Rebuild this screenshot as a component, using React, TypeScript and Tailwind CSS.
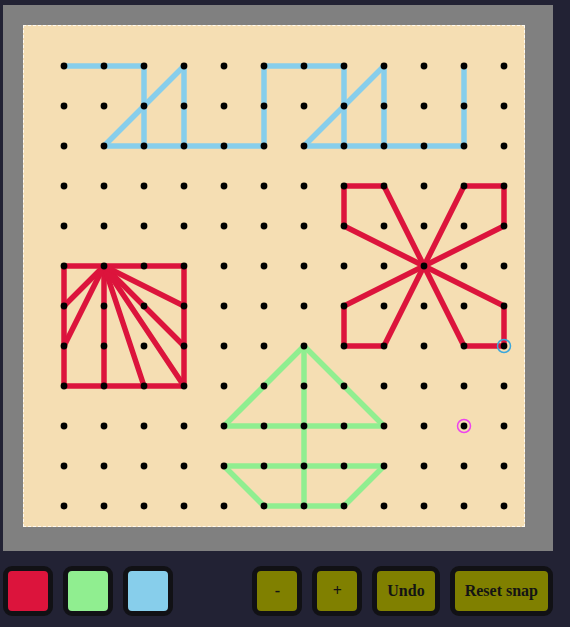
import React from "react";

type Seg = [number, number, number, number];

const RED = "#dc143c";
const GREEN = "#90ee90";
const BLUE = "#87ceeb";

const SHAPES: { color: string; segs: Seg[] }[] = [
  {
    color: BLUE,
    segs: [
      [0, 0, 2, 0], [2, 0, 2, 2], [3, 0, 1, 2], [3, 0, 3, 2], [1, 2, 5, 2], [5, 0, 5, 2],
      [5, 0, 7, 0], [7, 0, 7, 2], [8, 0, 6, 2], [8, 0, 8, 2], [6, 2, 10, 2], [10, 0, 10, 2],
    ],
  },
  {
    color: RED,
    segs: [
      [0, 5, 3, 5], [0, 5, 0, 8], [3, 5, 3, 8], [0, 8, 3, 8], [1, 5, 1, 8],
      [1, 5, 0, 6], [1, 5, 0, 7], [1, 5, 2, 8], [1, 5, 3, 8], [1, 5, 3, 7], [1, 5, 3, 6],
    ],
  },
  {
    color: RED,
    segs: [
      [7, 3, 8, 3], [7, 3, 7, 4], [8, 3, 9, 5], [7, 4, 9, 5],
      [10, 3, 11, 3], [11, 3, 11, 4], [10, 3, 9, 5], [11, 4, 9, 5],
      [7, 6, 7, 7], [7, 7, 8, 7], [7, 6, 9, 5], [8, 7, 9, 5],
      [11, 6, 11, 7], [10, 7, 11, 7], [11, 6, 9, 5], [10, 7, 9, 5],
    ],
  },
  {
    color: GREEN,
    segs: [
      [6, 7, 4, 9], [6, 7, 8, 9], [4, 9, 8, 9], [6, 7, 6, 11],
      [4, 10, 8, 10], [4, 10, 5, 11], [8, 10, 7, 11], [5, 11, 7, 11],
    ],
  },
];

const p = (n: number) => 40 + 40 * n;

function Board() {
  const dots: React.ReactNode[] = [];
  for (let r = 0; r < 12; r++) {
    for (let c = 0; c < 12; c++) {
      dots.push(<circle key={`${r}-${c}`} cx={p(c)} cy={p(r)} r={3.4} fill="#000" />);
    }
  }
  return (
    <svg width={500} height={500} className="block">
      {SHAPES.map((s, i) =>
        s.segs.map(([c1, r1, c2, r2], j) => (
          <line
            key={`${i}-${j}`}
            x1={p(c1)}
            y1={p(r1)}
            x2={p(c2)}
            y2={p(r2)}
            stroke={s.color}
            strokeWidth={5.5}
            strokeLinecap="round"
          />
        ))
      )}
      {dots}
      <circle cx={p(10)} cy={p(9)} r={6.5} fill="none" stroke="#ee44ee" strokeWidth={1.5} />
      <circle cx={p(11)} cy={p(7)} r={6.5} fill="none" stroke="#3ba6dc" strokeWidth={1.5} />
    </svg>
  );
}

function Swatch({ color }: { color: string }) {
  return (
    <button
      type="button"
      className="h-[50px] w-[50px] rounded-[9px] border-[5px] border-[#111115]"
      style={{ backgroundColor: color }}
    />
  );
}

function ToolButton({ label, square = false }: { label: string; square?: boolean }) {
  return (
    <button
      type="button"
      className={`h-[50px] ${square ? "w-[50px]" : "px-[10px]"} rounded-[9px] border-[5px] border-[#111115] bg-[#808000] font-['Liberation_Serif',serif] text-[16px] font-bold text-[#141414]`}
    >
      {label}
    </button>
  );
}

export default function App() {
  return (
    <div className="h-[627px] w-full bg-[#222234] pl-[3px] pt-[5px]">
      <div className="h-[546px] w-[550px] bg-[#808080] pl-[20px] pt-[20px]">
        <div className="h-[502px] w-[502px] border border-dashed border-[#fffaf0] bg-[#f5deb3]">
          <Board />
        </div>
      </div>
      <div className="mt-[15px] flex w-[550px] justify-between">
        <div className="flex gap-[10px]">
          <Swatch color={RED} />
          <Swatch color={GREEN} />
          <Swatch color={BLUE} />
        </div>
        <div className="flex gap-[10px]">
          <ToolButton label="-" square />
          <ToolButton label="+" square />
          <ToolButton label="Undo" />
          <ToolButton label="Reset snap" />
        </div>
      </div>
    </div>
  );
}
